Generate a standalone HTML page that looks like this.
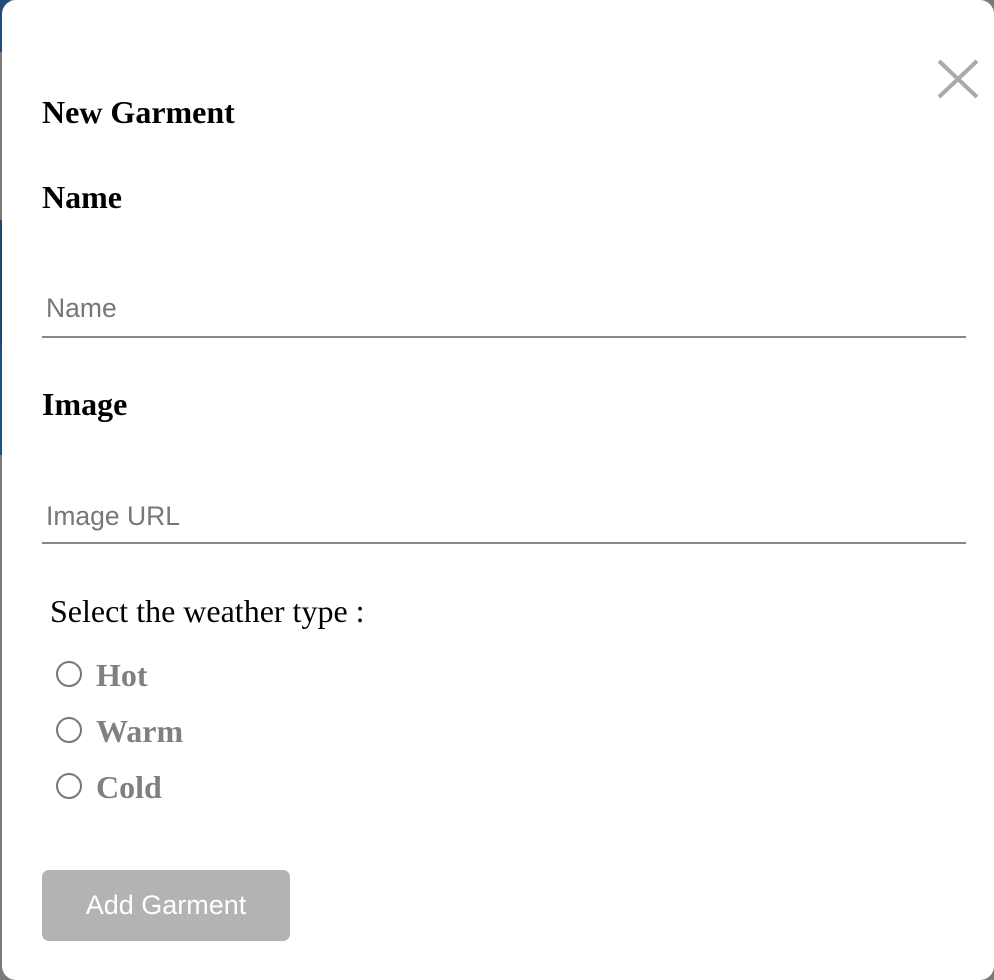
<!DOCTYPE html>
<html><head><meta charset="utf-8"><style>
html,body{margin:0;padding:0;width:994px;height:980px;overflow:hidden;background:#7a7a7a;position:relative}
.bg{position:absolute;left:0;width:10px}
.m{position:absolute;left:2px;top:0;width:992px;height:980px;background:#fff;border-radius:14px}
.t{position:absolute;line-height:1;white-space:nowrap}
.s{font-family:"Liberation Serif",serif}
.a{font-family:"Liberation Sans",sans-serif}
.h{font-weight:bold;font-size:32px;color:#000;left:42px}
.ph{font-size:26.5px;color:#777;left:46px}
.ln{position:absolute;left:42px;width:924px;height:2px;background:#888}
.r{position:absolute;left:56px;width:22px;height:22px;border:2px solid #777;border-radius:50%}
.rl{font-weight:bold;font-size:32px;color:#808080;left:96px}
.btn{position:absolute;left:42px;top:870px;width:248px;height:71px;background:#b3b3b3;border-radius:7px;color:#fff;font-size:27px;display:flex;align-items:center;justify-content:center}
</style></head><body>
<div class="bg" style="top:0;height:52px;background:#1f4e7a"></div>
<div class="bg" style="top:220px;height:125px;background:#1e466d"></div>
<div class="bg" style="top:345px;height:110px;background:#1d4f80"></div>
<div class="m">
</div>
<div class="t s h" style="top:96px">New Garment</div>
<div class="t s h" style="top:181px">Name</div>
<div class="t a ph" style="top:295px">Name</div>
<div class="ln" style="top:336px"></div>
<div class="t s h" style="top:388px">Image</div>
<div class="t a ph" style="top:503px">Image URL</div>
<div class="ln" style="top:542px"></div>
<div class="t s" style="top:595px;left:50px;font-size:32px;color:#000">Select the weather type :</div>
<div class="r" style="top:661px"></div>
<div class="t s rl" style="top:659px">Hot</div>
<div class="r" style="top:717px"></div>
<div class="t s rl" style="top:715px">Warm</div>
<div class="r" style="top:773px"></div>
<div class="t s rl" style="top:771px">Cold</div>
<div class="btn a">Add Garment</div>
<svg style="position:absolute;left:936px;top:58px" width="44" height="42"><path d="M3 3 L41 39 M41 3 L3 39" stroke="#aaa" stroke-width="4" fill="none"/></svg>
</body></html>
